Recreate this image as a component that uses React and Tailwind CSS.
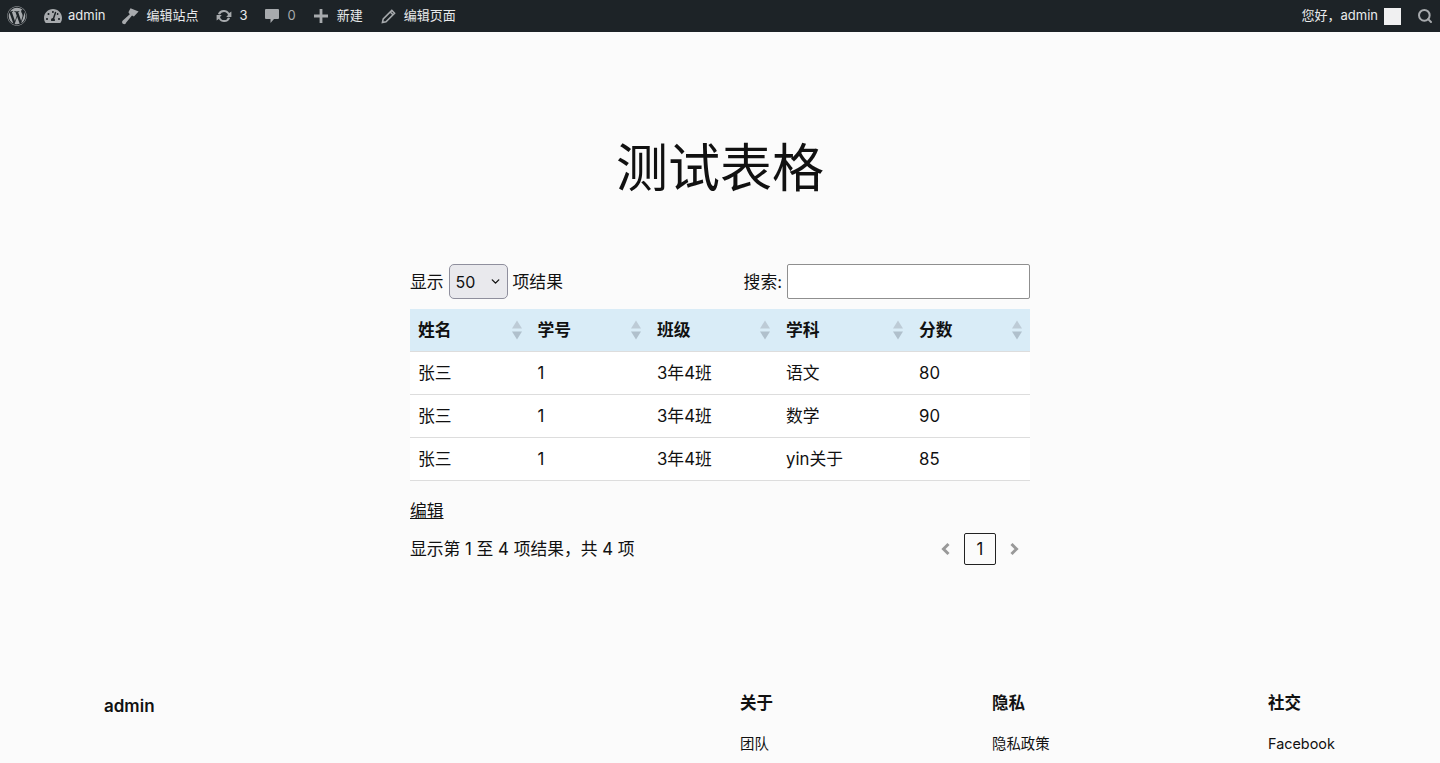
import { ChevronDown, Search } from "lucide-react";
import { FaWordpress, FaTachometerAlt } from "react-icons/fa";

const FONT = "font-['Inter','Noto_Sans_CJK_SC',sans-serif]";

const ROWS = [
  ["张三", "1", "3年4班", "语文", "80"],
  ["张三", "1", "3年4班", "数学", "90"],
  ["张三", "1", "3年4班", "yin关于", "85"],
];

const COLS = [
  { label: "姓名", w: "w-[119.5px]" },
  { label: "学号", w: "w-[119.5px]" },
  { label: "班级", w: "w-[129px]" },
  { label: "学科", w: "w-[133px]" },
  { label: "分数", w: "w-[119px]" },
];

// admin bar glyphs that the icon packages don't have in this shape
function BrushIcon() {
  return (
    <svg width="18" height="18" viewBox="0 0 18 18" className="fill-[#a7aaad]">
      <path d="M9.5 1.2 L17.6 4.6 L12.9 9.6 L11 8.4 L5.2 15.6 A2 2 0 0 1 2 16.8 A2 2 0 0 1 1.8 13.6 L8.8 7.2 L7.4 5.2 Z" />
    </svg>
  );
}

function UpdateIcon() {
  return (
    <svg width="18" height="18" viewBox="0 0 18 18" className="fill-[#a7aaad]">
      <path d="M9 3a6 6 0 0 1 5.2 3L16.4 4.6 V10 H11.2 L13 8.1 A4.2 4.2 0 0 0 5 7.6 L2.9 7 A6.2 6.2 0 0 1 9 3 Z" />
      <path d="M9 15a6 6 0 0 1-5.2-3L1.6 13.4 V8 H6.8 L5 9.9 A4.2 4.2 0 0 0 13 10.4 L15.1 11 A6.2 6.2 0 0 1 9 15 Z" />
    </svg>
  );
}

function CommentIcon() {
  return (
    <svg width="16" height="16" viewBox="0 0 16 16" className="fill-[#a7aaad]">
      <path d="M2 1 H14 A1 1 0 0 1 15 2 V10 A1 1 0 0 1 14 11 H10 L6.5 15 V11 H2 A1 1 0 0 1 1 10 V2 A1 1 0 0 1 2 1 Z" />
    </svg>
  );
}

function PlusIcon() {
  return (
    <svg width="14" height="14" viewBox="0 0 14 14" className="fill-[#a7aaad]">
      <path d="M5.6 0 H8.4 V5.6 H14 V8.4 H8.4 V14 H5.6 V8.4 H0 V5.6 H5.6 Z" />
    </svg>
  );
}

function PencilIcon() {
  return (
    <svg width="15" height="15" viewBox="0 0 15 15" fill="none" className="stroke-[#a7aaad]" strokeWidth="1.5">
      <path d="M10.8 1.4 L13.6 4.2 L5 12.8 L1.4 13.6 L2.2 10 Z" />
      <path d="M9.2 3 L12 5.8" />
    </svg>
  );
}

function SortArrows() {
  return (
    <div className="flex flex-col gap-[3px] absolute right-[8px] top-1/2 -translate-y-1/2">
      <div className="w-0 h-0 border-x-[5px] border-x-transparent border-b-[8px] border-b-[#bdcbd6]" />
      <div className="w-0 h-0 border-x-[5px] border-x-transparent border-t-[8px] border-t-[#b0c0cc]" />
    </div>
  );
}

function BarItem({ icon, label, className = "" }) {
  return (
    <div className={`flex items-center ${className}`}>
      {icon}
      <span>{label}</span>
    </div>
  );
}

function AdminBar() {
  return (
    <div className="h-8 bg-[#1d2327] text-[#e8eaeb] text-[13px] flex items-center justify-between shrink-0">
      <div className="flex items-center">
        <FaWordpress className="ml-[7px] mr-[17px] text-[#a7aaad]" size={20} />
        <BarItem icon={<FaTachometerAlt className="text-[#a7aaad]" size={18} />} label="admin" className="gap-[6px] mr-[16px]" />
        <BarItem icon={<BrushIcon />} label="编辑站点" className="gap-[7px] mr-[16px]" />
        <BarItem icon={<UpdateIcon />} label="3" className="gap-[7px] mr-[16px]" />
        <BarItem icon={<CommentIcon />} label={<span className="text-[#a7aaad]">0</span>} className="gap-[8px] mr-[18px]" />
        <BarItem icon={<PlusIcon />} label="新建" className="gap-[9px] mr-[18px]" />
        <BarItem icon={<PencilIcon />} label="编辑页面" className="gap-[8px]" />
      </div>
      <div className="flex items-center">
        <span>您好，admin</span>
        <div className="w-[17px] h-[17px] bg-[#f0f0f1] ml-[6px] mr-[16px]" />
        <Search className="text-[#a7aaad] mr-[7px]" size={16} strokeWidth={3} />
      </div>
    </div>
  );
}

function DataTable() {
  return (
    <div className="w-[620px] mx-auto text-[16.8px] text-[#111]">
      <div className="flex items-center justify-between h-[35px] mt-[63px]">
        <div className="flex items-center gap-[5px]">
          <span className="pt-[2px]">显示</span>
          <div className="w-[59px] h-[35px] rounded-[5px] border border-[#8f8f9d] bg-[#e9e9ed] flex items-center justify-between pl-[6px] pr-[5px] text-[16px]">
            <span>50</span>
            <ChevronDown size={13} strokeWidth={2.5} />
          </div>
          <span className="pt-[2px]">项结果</span>
        </div>
        <div className="flex items-center gap-[5px]">
          <span className="pt-[2px]">搜索:</span>
          <div className="w-[243px] h-[35px] rounded-[2px] border border-[#8f8f8f] bg-white" />
        </div>
      </div>

      <div className="mt-[10px]">
        <div className="flex h-[43px] bg-[#d9ecf7] font-bold border-b border-[#ddd] leading-[40px]">
          {COLS.map((c) => (
            <div key={c.label} className={`${c.w} relative flex items-center pl-2`}>
              {c.label}
              <SortArrows />
            </div>
          ))}
        </div>
        {ROWS.map((row, i) => (
          <div key={i} className="flex h-[43px] bg-white border-b border-[#ddd]">
            {row.map((cell, j) => (
              <div key={j} className={`${COLS[j].w} flex items-center pl-2 pt-[2px]`}>{cell}</div>
            ))}
          </div>
        ))}
      </div>

      <a href="#" className="block underline mt-[18px] leading-[24px] text-[#111]">编辑</a>

      <div className="flex items-center justify-between mt-[10px] h-[32px]">
        <span className="pt-[2px]">显示第 1 至 4 项结果，共 4 项</span>
        <div className="flex items-center mr-[7px] text-[#999]">
          <svg width="18" height="18" viewBox="0 0 18 18" fill="none" stroke="currentColor" strokeWidth="3" className="mr-[9px]">
            <path d="M11.5 4 L6.5 9 L11.5 14" />
          </svg>
          <div className="w-8 h-8 rounded-[2px] border border-[#222] flex items-center justify-center text-[#111] pt-[2px]">1</div>
          <svg width="18" height="18" viewBox="0 0 18 18" fill="none" stroke="currentColor" strokeWidth="3" className="ml-[9px]">
            <path d="M6.5 4 L11.5 9 L6.5 14" />
          </svg>
        </div>
      </div>
    </div>
  );
}

function Footer() {
  return (
    <div className="flex text-[#111] text-[14.4px] leading-[24px] mt-[126px] px-[104px]">
      <div className="w-[636px] font-semibold text-[17px] pt-[3px]">admin</div>
      <div className="w-[252px]">
        <div className="font-semibold text-[16.5px]">关于</div>
        <div className="mt-[17px]">团队</div>
      </div>
      <div className="w-[276px]">
        <div className="font-semibold text-[16.5px]">隐私</div>
        <div className="mt-[17px]">隐私政策</div>
      </div>
      <div>
        <div className="font-semibold text-[16.5px]">社交</div>
        <div className="mt-[17px]">Facebook</div>
      </div>
    </div>
  );
}

export default function App() {
  return (
    <div className={`h-[763px] overflow-hidden bg-[#fbfbfb] flex flex-col ${FONT}`}>
      <AdminBar />
      <h1 className="text-center text-[52px] font-normal leading-[64px] mt-[105px] text-[#111]">测试表格</h1>
      <DataTable />
      <Footer />
    </div>
  );
}
